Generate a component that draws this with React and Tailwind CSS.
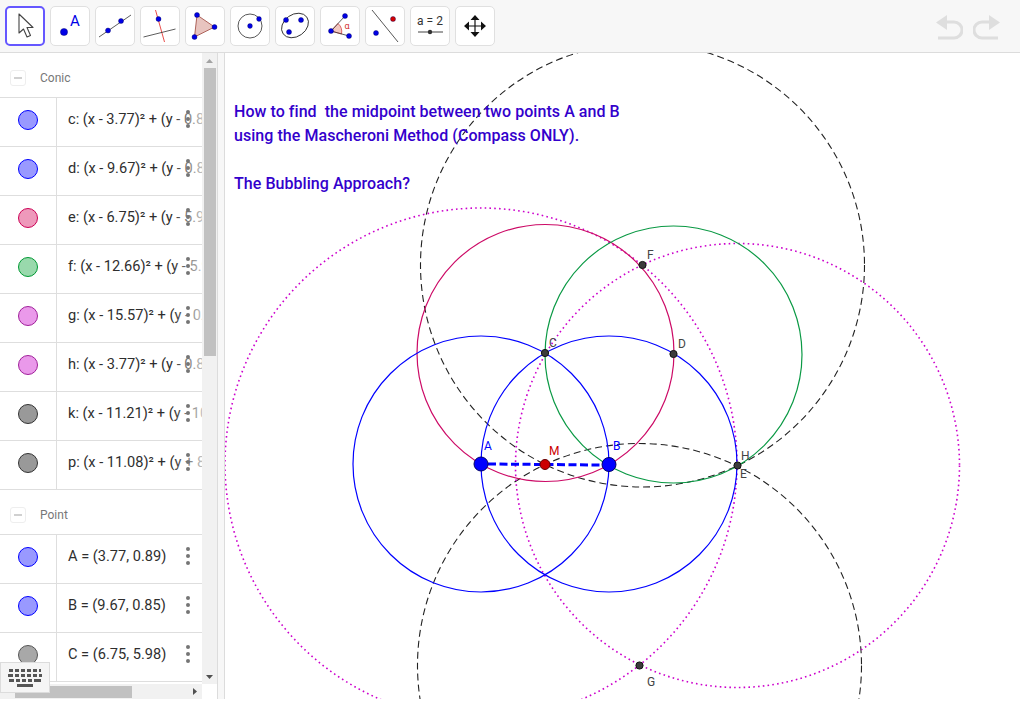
import React from "react";

function Btn({ active, children }) {
  return (
    <div className={`w-[40px] h-[40px] rounded-[5px] bg-white border flex-none ${active ? "border-[#6557ff] border-2" : "border-[#e0e0e0]"}`}>
      <svg viewBox="0 0 40 40" className={`w-[40px] h-[40px] ${active ? "-m-[2px]" : "-m-[1px]"}`}>{children}</svg>
    </div>
  );
}

const dot = (x, y, r = 2.5, fill = "#0000e6") => <circle cx={x} cy={y} r={r} fill={fill} stroke="#00005a" strokeWidth=".4" />;

function Toolbar() {
  return (
    <div className="h-[53px] flex-none bg-[#f7f7f7] border-b border-[#dcdcdc] flex items-center pl-[5px] gap-[5px]">
      <Btn active>
        <path d="M14 8 L14 27 L18.5 23 L22 31 L25.5 29.5 L22 21.5 L28 21.5 Z" fill="#fff" stroke="#444" strokeWidth="1.1" strokeLinejoin="round" />
      </Btn>
      <Btn>
        {dot(14, 26, 3.6)}
        <text x="20" y="20" fontSize="15" fill="#0000e6" fontFamily="Roboto, sans-serif">A</text>
      </Btn>
      <Btn>
        <path d="M4 31 L36 9" stroke="#333" strokeWidth=".8" />
        {dot(13, 24.5)}
        {dot(26, 15)}
      </Btn>
      <Btn>
        <path d="M15.5 4 L24.5 36" stroke="#e53935" strokeWidth=".9" />
        <path d="M3.5 31 L35.5 23" stroke="#333" strokeWidth=".8" />
        {dot(18.5, 13)}
      </Btn>
      <Btn>
        <path d="M12 9 L29.5 21 L9.5 31 Z" fill="#e8c4bf" stroke="#a5554c" strokeWidth=".9" />
        {dot(12, 9)}
        {dot(29.5, 21)}
        {dot(9.5, 31)}
      </Btn>
      <Btn>
        <circle cx="20" cy="20" r="12" fill="none" stroke="#444" strokeWidth=".9" />
        {dot(20, 20, 2.4)}
        {dot(29, 13, 2.4)}
      </Btn>
      <Btn>
        <ellipse cx="20" cy="19.5" rx="14.5" ry="11" transform="rotate(-35 20 19.5)" fill="none" stroke="#333" strokeWidth=".9" />
        {dot(11, 14)}
        {dot(26, 14)}
        {dot(14, 26)}
      </Btn>
      <Btn>
        <path d="M11 25 L18 17.5 A11 11 0 0 1 21.5 28 Z" fill="#f3c8c0" stroke="#d32f2f" strokeWidth=".7" />
        <path d="M11 25 L25 10 M11 25 L29 30" stroke="#333" strokeWidth=".8" />
        {dot(11, 25)}
        {dot(25, 10)}
        {dot(29, 30)}
        <text x="24.5" y="23" fontSize="9" fill="#d32f2f" fontFamily="Roboto, sans-serif">α</text>
      </Btn>
      <Btn>
        <path d="M7 4 L33 36" stroke="#444" strokeWidth=".9" />
        {dot(28, 13, 2.5, "#d50000")}
        {dot(11, 27)}
      </Btn>
      <Btn>
        <text x="20" y="19" textAnchor="middle" fontSize="12" fill="#333" fontFamily="Roboto, sans-serif">a = 2</text>
        <path d="M8 26 L33 26" stroke="#555" strokeWidth="1.1" />
        <circle cx="20" cy="26" r="2.2" fill="#333" />
      </Btn>
      <Btn>
        <path d="M20 12 L20 28 M12 20 L28 20" stroke="#111" strokeWidth="1.2" />
        <path d="M20 9 L15.5 14 L24.5 14 Z M20 31 L15.5 26 L24.5 26 Z M9 20 L14 15.5 L14 24.5 Z M31 20 L26 15.5 L26 24.5 Z" fill="#111" />
      </Btn>
      <div className="ml-auto mr-[20px] mt-[2px] flex items-center gap-[10px]">
        <svg viewBox="0 0 27 25" className="w-[27px] h-[25px]">
          <path d="M0 7.5 L11 0 L11 15 Z" fill="#dedede" />
          <path d="M8 7 H18 A8 8 0 0 1 18 23 H2" fill="none" stroke="#dedede" strokeWidth="3" />
        </svg>
        <svg viewBox="0 0 27 25" className="w-[27px] h-[25px]">
          <path d="M27 7.5 L16 0 L16 15 Z" fill="#dedede" />
          <path d="M19 7 H9 A8 8 0 0 0 9 23 H25" fill="none" stroke="#dedede" strokeWidth="3" />
        </svg>
      </div>
    </div>
  );
}

function Header({ label }) {
  return (
    <div className="h-[45px] flex-none flex items-center pl-[10px] pt-[5px] border-b border-[#dedede]">
      <div className="w-[16px] h-[16px] rounded-[3px] border border-[#eeeeee] flex items-center justify-center">
        <div className="w-[8px] h-[2px] bg-[#d0d0d0]" />
      </div>
      <span className="ml-[14px] text-[12px] text-[#777]">{label}</span>
    </div>
  );
}

function Row({ fill, stroke, text, fade }) {
  return (
    <div className="h-[49px] flex-none flex border-b border-[#dedede] relative">
      <div className="w-[57px] flex-none border-r border-[#dedede] flex items-center justify-center pb-[4px]">
        <div className={`w-[20px] h-[20px] rounded-full border ${fill} ${stroke}`} />
      </div>
      <div className="flex-1 min-w-0 pl-[11px] pb-[4px] flex items-center text-[14.6px] text-[#2e2e2e] whitespace-nowrap overflow-hidden">
        {text}
      </div>
      {fade && <div className="absolute left-[172px] right-0 top-0 bottom-0 bg-gradient-to-r from-white/0 to-white/70" />}
      <div className="absolute right-[12px] top-[12px] flex flex-col gap-[3px]">
        <div className="w-[4px] h-[4px] rounded-full bg-[#757575]" />
        <div className="w-[4px] h-[4px] rounded-full bg-[#757575]" />
        <div className="w-[4px] h-[4px] rounded-full bg-[#757575]" />
      </div>
    </div>
  );
}

const blue = ["bg-[#9999ff]", "border-[#0000ff]"];
const rows1 = [
  ["c: (x - 3.77)² + (y - 0.89)² = 34.81", ...blue],
  ["d: (x - 9.67)² + (y - 0.85)² = 34.81", ...blue],
  ["e: (x - 6.75)² + (y - 5.98)² = 34.81", "bg-[#ee99bb]", "border-[#cc0055]"],
  ["f: (x - 12.66)² + (y - 5.94)² = 34.81", "bg-[#99d9ac]", "border-[#009933]"],
  ["g: (x - 15.57)² + (y - 0.81)² = 103.8", "bg-[#ea99ea]", "border-[#a0209a]"],
  ["h: (x - 3.77)² + (y - 0.89)² = 139.2", "bg-[#ea99ea]", "border-[#a0209a]"],
  ["k: (x - 11.21)² + (y - 10.15)² = 103.8", "bg-[#999999]", "border-[#333333]"],
  ["p: (x - 11.08)² + (y + 8.47)² = 103.8", "bg-[#999999]", "border-[#333333]"],
];
const rows2 = [
  ["A = (3.77, 0.89)", ...blue],
  ["B = (9.67, 0.85)", ...blue],
  ["C = (6.75, 5.98)", "bg-[#a8a8a8]", "border-[#555555]"],
];

function AlgebraPanel() {
  return (
    <div className="w-[217px] flex-none flex flex-col relative font-['Roboto',sans-serif]">
      <div className="flex-1 min-h-0 flex">
        <div className="w-[202px] flex-none flex flex-col overflow-hidden">
          <Header label="Conic" />
          {rows1.map((r) => (
            <Row key={r[0]} text={r[0]} fill={r[1]} stroke={r[2]} fade />
          ))}
          <Header label="Point" />
          {rows2.map((r) => (
            <Row key={r[0]} text={r[0]} fill={r[1]} stroke={r[2]} />
          ))}
        </div>
        <div className="w-[15px] flex-none bg-[#f1f1f1] flex flex-col items-center">
          <svg viewBox="0 0 15 15" className="w-[15px] h-[15px] flex-none"><path d="M4 10 L11 10 L7.5 6 Z" fill="#a3a3a3" /></svg>
          <div className="w-[12px] h-[288px] bg-[#c1c1c1]" />
          <div className="flex-1" />
          <svg viewBox="0 0 15 15" className="w-[15px] h-[15px] flex-none"><path d="M4 6 L11 6 L7.5 10 Z" fill="#505050" /></svg>
        </div>
      </div>
      <div className="h-[15px] flex-none flex bg-white">
        <div className="w-[202px] bg-[#f1f1f1] flex items-center">
          <div className="w-[117px] h-[12px] ml-[15px] bg-[#c1c1c1]" />
          <svg viewBox="0 0 15 15" className="w-[15px] h-[15px] ml-auto"><path d="M6 4 L6 11 L10 7.5 Z" fill="#505050" /></svg>
        </div>
      </div>
      <div className="absolute left-0 bottom-[6px] w-[50px] h-[31px] bg-[#f5f5f5] border border-[#dcdcdc] flex items-center justify-center">
        <svg viewBox="0 0 34 20" className="w-[34px] h-[20px]" fill="#555">
          <path d="M1 1h4v3H1zM7 1h4v3H7zM13 1h4v3h-4zM19 1h4v3h-4zM25 1h4v3h-4zM31 1h2v3h-2z" />
          <path d="M0 6h5v3H0zM7 6h4v3H7zM13 6h4v3h-4zM19 6h4v3h-4zM25 6h4v3h-4zM31 6h3v3h-3z" />
          <path d="M1 11h5v3H1zM8 11h4v3H8zM14 11h4v3h-4zM20 11h4v3h-4zM26 11h7v3h-7z" />
          <path d="M9 16h16v3H9z" />
        </svg>
      </div>
    </div>
  );
}

const C = ({ cx, cy, r, color, dash, w = 1.1 }) => (
  <circle cx={cx} cy={cy} r={r} fill="none" stroke={color} strokeWidth={w} strokeDasharray={dash} />
);

const Pt = ({ x, y, r = 3.6, fill = "#3c3c3c", stroke = "#111" }) => (
  <circle cx={x} cy={y} r={r} fill={fill} stroke={stroke} strokeWidth="1" />
);

const Lbl = ({ x, y, fill = "#444", children }) => (
  <text x={x} y={y} fontSize="12" fill={fill} fontFamily="Roboto, sans-serif">{children}</text>
);

function Canvas() {
  return (
    <div className="flex-1 min-w-0 relative bg-white border-l border-[#dcdcdc] overflow-hidden">
      <svg className="absolute left-0 top-0 w-[795px] h-[646px]" viewBox="225 53 795 646">
        <C cx={642.5} cy={265} r={222} color="#222" dash="7 4" />
        <C cx={639.5} cy={665.5} r={222} color="#222" dash="7 4" />
        <C cx={481} cy={464} r={256} color="#cc00cc" dash="1.6 3.2" w={1.6} />
        <C cx={737.5} cy={465.5} r={222} color="#cc00cc" dash="1.6 3.2" w={1.6} />
        <C cx={545.5} cy={353} r={128.5} color="#cc0a66" w={1.2} />
        <C cx={673.5} cy={354.5} r={128.5} color="#0a9944" w={1.2} />
        <C cx={481} cy={464} r={128} color="#0000ff" w={1.2} />
        <C cx={609} cy={464} r={128} color="#0000ff" w={1.2} />
        <path d="M488 464 L602 465" stroke="#0000ff" strokeWidth="3" strokeDasharray="8 3.5" />
        <Pt x={642.5} y={265} />
        <Pt x={545} y={353} />
        <Pt x={673.5} y={354} />
        <Pt x={737.5} y={465.5} />
        <Pt x={639.5} y={665.5} />
        <Pt x={545} y={464.5} r={5} fill="#cc0000" stroke="#660000" />
        <Pt x={481} y={464} r={7} fill="#0000ff" stroke="#000066" />
        <Pt x={609} y={464.5} r={7} fill="#0000ff" stroke="#000066" />
        <Lbl x={484} y={450} fill="#0000ff">A</Lbl>
        <Lbl x={613} y={450} fill="#0000ff">B</Lbl>
        <Lbl x={549} y={455} fill="#cc0000">M</Lbl>
        <Lbl x={549} y={347}>C</Lbl>
        <Lbl x={678} y={348}>D</Lbl>
        <Lbl x={740} y={478}>E</Lbl>
        <Lbl x={647} y={259}>F</Lbl>
        <Lbl x={647} y={686}>G</Lbl>
        <Lbl x={741} y={460}>H</Lbl>
      </svg>
      <div className="relative pt-[47px] pl-[9px] font-['Roboto',sans-serif] text-[16px] leading-[24px] font-medium tracking-[0.05px] text-[#3300cc] whitespace-pre">
        {"How to find  the midpoint between two points A and B\nusing the Mascheroni Method (Compass ONLY).\n\nThe Bubbling Approach?"}
      </div>
    </div>
  );
}

export default function App() {
  return (
    <div className="w-[1021px] h-[701px] overflow-hidden bg-white">
      <div className="w-[1020px] h-[699px] flex flex-col overflow-hidden bg-white">
        <Toolbar />
        <div className="flex-1 min-h-0 flex">
          <AlgebraPanel />
          <div className="w-[7px] flex-none bg-[#f7f7f7] border-l border-[#dcdcdc]" />
          <Canvas />
        </div>
      </div>
    </div>
  );
}
